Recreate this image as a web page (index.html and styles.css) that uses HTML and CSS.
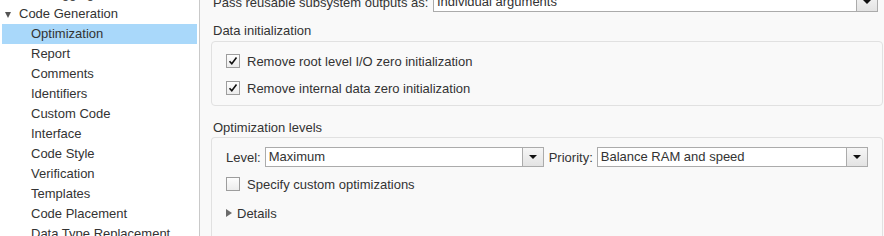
FILE: index.html
```html
<!DOCTYPE html>
<html lang="en">
<head>
    <meta charset="UTF-8">
    <title>Configuration Parameters - Optimization</title>
    <link rel="stylesheet" href="styles.css">
</head>
<body>
    <div class="tree">
        <div class="tree-item child">Debugging</div>
        <div class="tree-item parent"><span class="caret-down"></span>Code Generation</div>
        <div class="tree-item child selected">Optimization</div>
        <div class="tree-item child">Report</div>
        <div class="tree-item child">Comments</div>
        <div class="tree-item child">Identifiers</div>
        <div class="tree-item child">Custom Code</div>
        <div class="tree-item child">Interface</div>
        <div class="tree-item child">Code Style</div>
        <div class="tree-item child">Verification</div>
        <div class="tree-item child">Templates</div>
        <div class="tree-item child">Code Placement</div>
        <div class="tree-item child">Data Type Replacement</div>
    </div>

    <div class="pane">
        <div class="top-row">
            <span class="top-label">Pass reusable subsystem outputs as:</span>
            <div class="combo combo-wide">
                <span class="combo-text">Individual arguments</span>
                <span class="combo-btn"><span class="arrow"></span></span>
            </div>
        </div>

        <div class="group-title">Data initialization</div>
        <div class="group">
            <label class="check-row">
                <span class="checkbox"><svg width="12" height="12" viewBox="0 0 12 12"><path d="M2.5 6.2 L4.8 8.8 L9.5 2.5" fill="none" stroke="#111" stroke-width="1.6"/></svg></span>
                Remove root level I/O zero initialization
            </label>
            <label class="check-row">
                <span class="checkbox"><svg width="12" height="12" viewBox="0 0 12 12"><path d="M2.5 6.2 L4.8 8.8 L9.5 2.5" fill="none" stroke="#111" stroke-width="1.6"/></svg></span>
                Remove internal data zero initialization
            </label>
        </div>

        <div class="group-title second">Optimization levels</div>
        <div class="group group-open">
            <div class="level-row">
                <span class="field-label">Level:</span>
                <div class="combo combo-level">
                    <span class="combo-text">Maximum</span>
                    <span class="combo-btn"><span class="arrow"></span></span>
                </div>
                <span class="field-label">Priority:</span>
                <div class="combo combo-priority">
                    <span class="combo-text">Balance RAM and speed</span>
                    <span class="combo-btn"><span class="arrow"></span></span>
                </div>
            </div>
            <label class="check-row custom-row">
                <span class="checkbox"></span>
                Specify custom optimizations
            </label>
            <div class="details-row"><span class="caret-right"></span>Details</div>
        </div>
    </div>
</body>
</html>
```

FILE: styles.css
```css
* {
    margin: 0;
    padding: 0;
    box-sizing: border-box;
}

body {
    width: 884px;
    height: 236px;
    overflow: hidden;
    display: flex;
    font-family: "Liberation Sans", Arial, sans-serif;
    font-size: 13px;
    color: #333;
    background-color: #f9f9f9;
}

/* 左侧树 */
.tree {
    width: 200px;
    flex-shrink: 0;
    background-color: #fff;
    border-right: 1px solid #c9c9c9;
    padding: 0 2px;
    margin-top: -16px;
}

.tree-item {
    height: 20px;
    line-height: 20px;
    white-space: nowrap;
    position: relative;
}

.tree-item.parent {
    padding-left: 17px;
}

.tree-item.child {
    padding-left: 29px;
}

.tree-item.selected {
    background-color: #a9d8fa;
}

.caret-down {
    position: absolute;
    left: 3px;
    top: 8px;
    width: 0;
    height: 0;
    border-left: 3.5px solid transparent;
    border-right: 3.5px solid transparent;
    border-top: 6px solid #555;
}

/* 右侧内容 */
.pane {
    flex: 1;
    padding: 0 5px 0 11px;
}

.top-row {
    display: flex;
    align-items: center;
    height: 20px;
    margin-top: -8px;
    padding-left: 2px;
}

.top-label {
    width: 220px;
    white-space: nowrap;
}

.combo {
    display: flex;
    height: 20px;
    background-color: #fff;
    border: 1px solid #ababab;
}

.combo-wide {
    width: 445px;
}

.combo-level {
    width: 279px;
}

.combo-priority {
    width: 271px;
}

.combo-text {
    flex: 1;
    line-height: 18px;
    padding-left: 3px;
    white-space: nowrap;
    overflow: hidden;
}

.combo-btn {
    width: 21px;
    border-left: 1px solid #ababab;
    background: linear-gradient(#f6f6f6, #e3e3e3);
    display: flex;
    justify-content: center;
    align-items: center;
}

.arrow {
    width: 0;
    height: 0;
    border-left: 4px solid transparent;
    border-right: 4px solid transparent;
    border-top: 4px solid #111;
}

.group-title {
    height: 20px;
    line-height: 20px;
    margin-top: 8px;
    padding-top: 1px;
    padding-left: 2px;
}

.group-title.second {
    margin-top: 11px;
}

.group {
    margin-top: 1px;
    border: 1px solid #e1e1e1;
    border-radius: 4px;
    padding: 9px 14px 7px;
}

.group-open {
    margin-top: 0;
    border-bottom: none;
    border-bottom-left-radius: 0;
    border-bottom-right-radius: 0;
    padding-top: 9px;
    padding-bottom: 20px;
}

.check-row {
    display: flex;
    align-items: center;
    gap: 7px;
    height: 20px;
}

.check-row + .check-row {
    margin-top: 7px;
}

.checkbox {
    width: 14px;
    height: 14px;
    border: 1px solid #9d9d9d;
    background: linear-gradient(#fdfdfd, #ececec);
    display: flex;
    justify-content: center;
    align-items: center;
}

.level-row {
    display: flex;
    align-items: center;
    height: 20px;
}

.level-row .field-label {
    margin-right: 4px;
}

.combo-level {
    margin-right: 5px;
}

.custom-row {
    margin-top: 7px;
}

.details-row {
    display: flex;
    align-items: center;
    height: 20px;
    margin-top: 9px;
}

.caret-right {
    width: 0;
    height: 0;
    border-top: 4px solid transparent;
    border-bottom: 4px solid transparent;
    border-left: 6px solid #6b6b6b;
    margin-right: 5px;
}
```
